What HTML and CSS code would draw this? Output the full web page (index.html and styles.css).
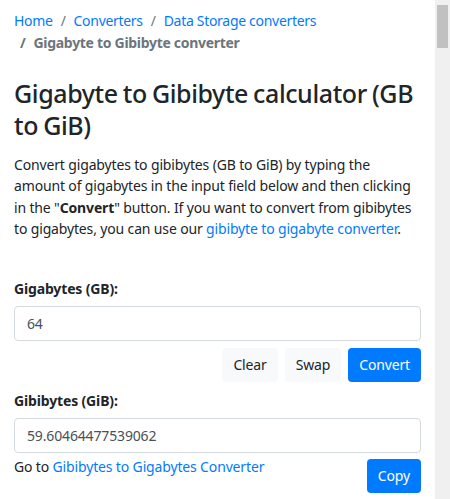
FILE: index.html
```html
<!DOCTYPE html>
<html lang="en">
<head>
    <meta charset="UTF-8">
    <meta name="viewport" content="width=device-width, initial-scale=1.0">
    <title>Gigabyte to Gibibyte converter</title>
    <link rel="stylesheet" href="styles.css">
</head>
<body>
    <div class="page">
        <div class="main">
            <nav class="crumbs">
                <a href="#">Home</a><span class="sep">/</span><a href="#">Converters</a><span class="sep">/</span><a href="#">Data Storage converters</a>
                <div class="crumb-current"><span class="sep">/</span>Gigabyte to Gibibyte converter</div>
            </nav>

            <h1>Gigabyte to Gibibyte calculator (GB to GiB)</h1>

            <p class="intro">Convert gigabytes to gibibytes (GB to GiB) by typing the amount of gigabytes in the input field below and then clicking in the "<b>Convert</b>" button. If you want to convert from gibibytes to gigabytes, you can use our <a href="#">gibibyte to gigabyte converter</a>.</p>

            <div class="field">
                <label for="gb">Gigabytes (GB):</label>
                <input id="gb" class="input" type="text" value="64">
                <div class="actions">
                    <button type="button" class="btn btn-light">Clear</button>
                    <button type="button" class="btn btn-light">Swap</button>
                    <button type="button" class="btn btn-primary">Convert</button>
                </div>
            </div>

            <div class="field">
                <label for="gib">Gibibytes (GiB):</label>
                <input id="gib" class="input" type="text" value="59.60464477539062">
                <div class="actions split">
                    <div class="goto">Go to <a href="#">Gibibytes to Gigabytes Converter</a></div>
                    <button type="button" class="btn btn-primary">Copy</button>
                </div>
            </div>
        </div>
        <div class="scrollbar"><div class="thumb"></div></div>
    </div>
</body>
</html>
```

FILE: styles.css
```css
body {
    margin: 0;
    font-family: "Noto Sans", "Open Sans", Arial, sans-serif;
    font-size: 14px;
    letter-spacing: -0.15px;
    color: #212529;
    background: #fff;
}
a {
    color: #007bff;
    text-decoration: none;
}
.page {
    display: flex;
    height: 499px;
    overflow: hidden;
}
.main {
    width: 407px;
    padding: 0 14px;
}
.scrollbar {
    width: 15px;
    background: #f0f0f0;
    padding-top: 5px;
    display: flex;
    justify-content: center;
}
.thumb {
    width: 11px;
    height: 43px;
    background: #c1c1c1;
}
.crumbs {
    padding-top: 10px;
    letter-spacing: -0.3px;
    line-height: 22px;
}
.sep {
    color: #6c757d;
    padding: 0 8px;
}
.crumb-current {
    color: #6c757d;
    font-weight: bold;
}
.crumb-current .sep {
    padding: 0 8px 0 6px;
}
h1 {
    font-size: 25px;
    font-weight: 500;
    letter-spacing: -0.4px;
    word-spacing: -1px;
    line-height: 32px;
    margin: 23px 0 13px;
}
.intro {
    line-height: 21.4px;
    margin: 0 0 39px;
}
.field label {
    display: block;
    font-weight: bold;
    line-height: 20px;
    margin-bottom: 7px;
}
.input {
    box-sizing: border-box;
    display: block;
    width: 100%;
    height: 35px;
    padding: 6px 12px;
    font-family: inherit;
    font-size: 14px;
    letter-spacing: -0.15px;
    color: #495057;
    border: 1px solid #d5dae0;
    border-radius: 4px;
}
.actions {
    display: flex;
    justify-content: flex-end;
    gap: 7px;
    margin: 7px 0 9px;
}
.actions.split {
    justify-content: space-between;
    align-items: flex-start;
    margin-top: 6px;
}
.btn {
    font-family: inherit;
    font-size: 14px;
    letter-spacing: -0.15px;
    height: 34px;
    padding: 0 11px;
    border: none;
    border-radius: 4px;
}
.btn-light {
    background: #f8f9fa;
    color: #212529;
}
.btn-primary {
    background: #007bff;
    color: #fff;
}
.goto {
    line-height: 16px;
}
```
